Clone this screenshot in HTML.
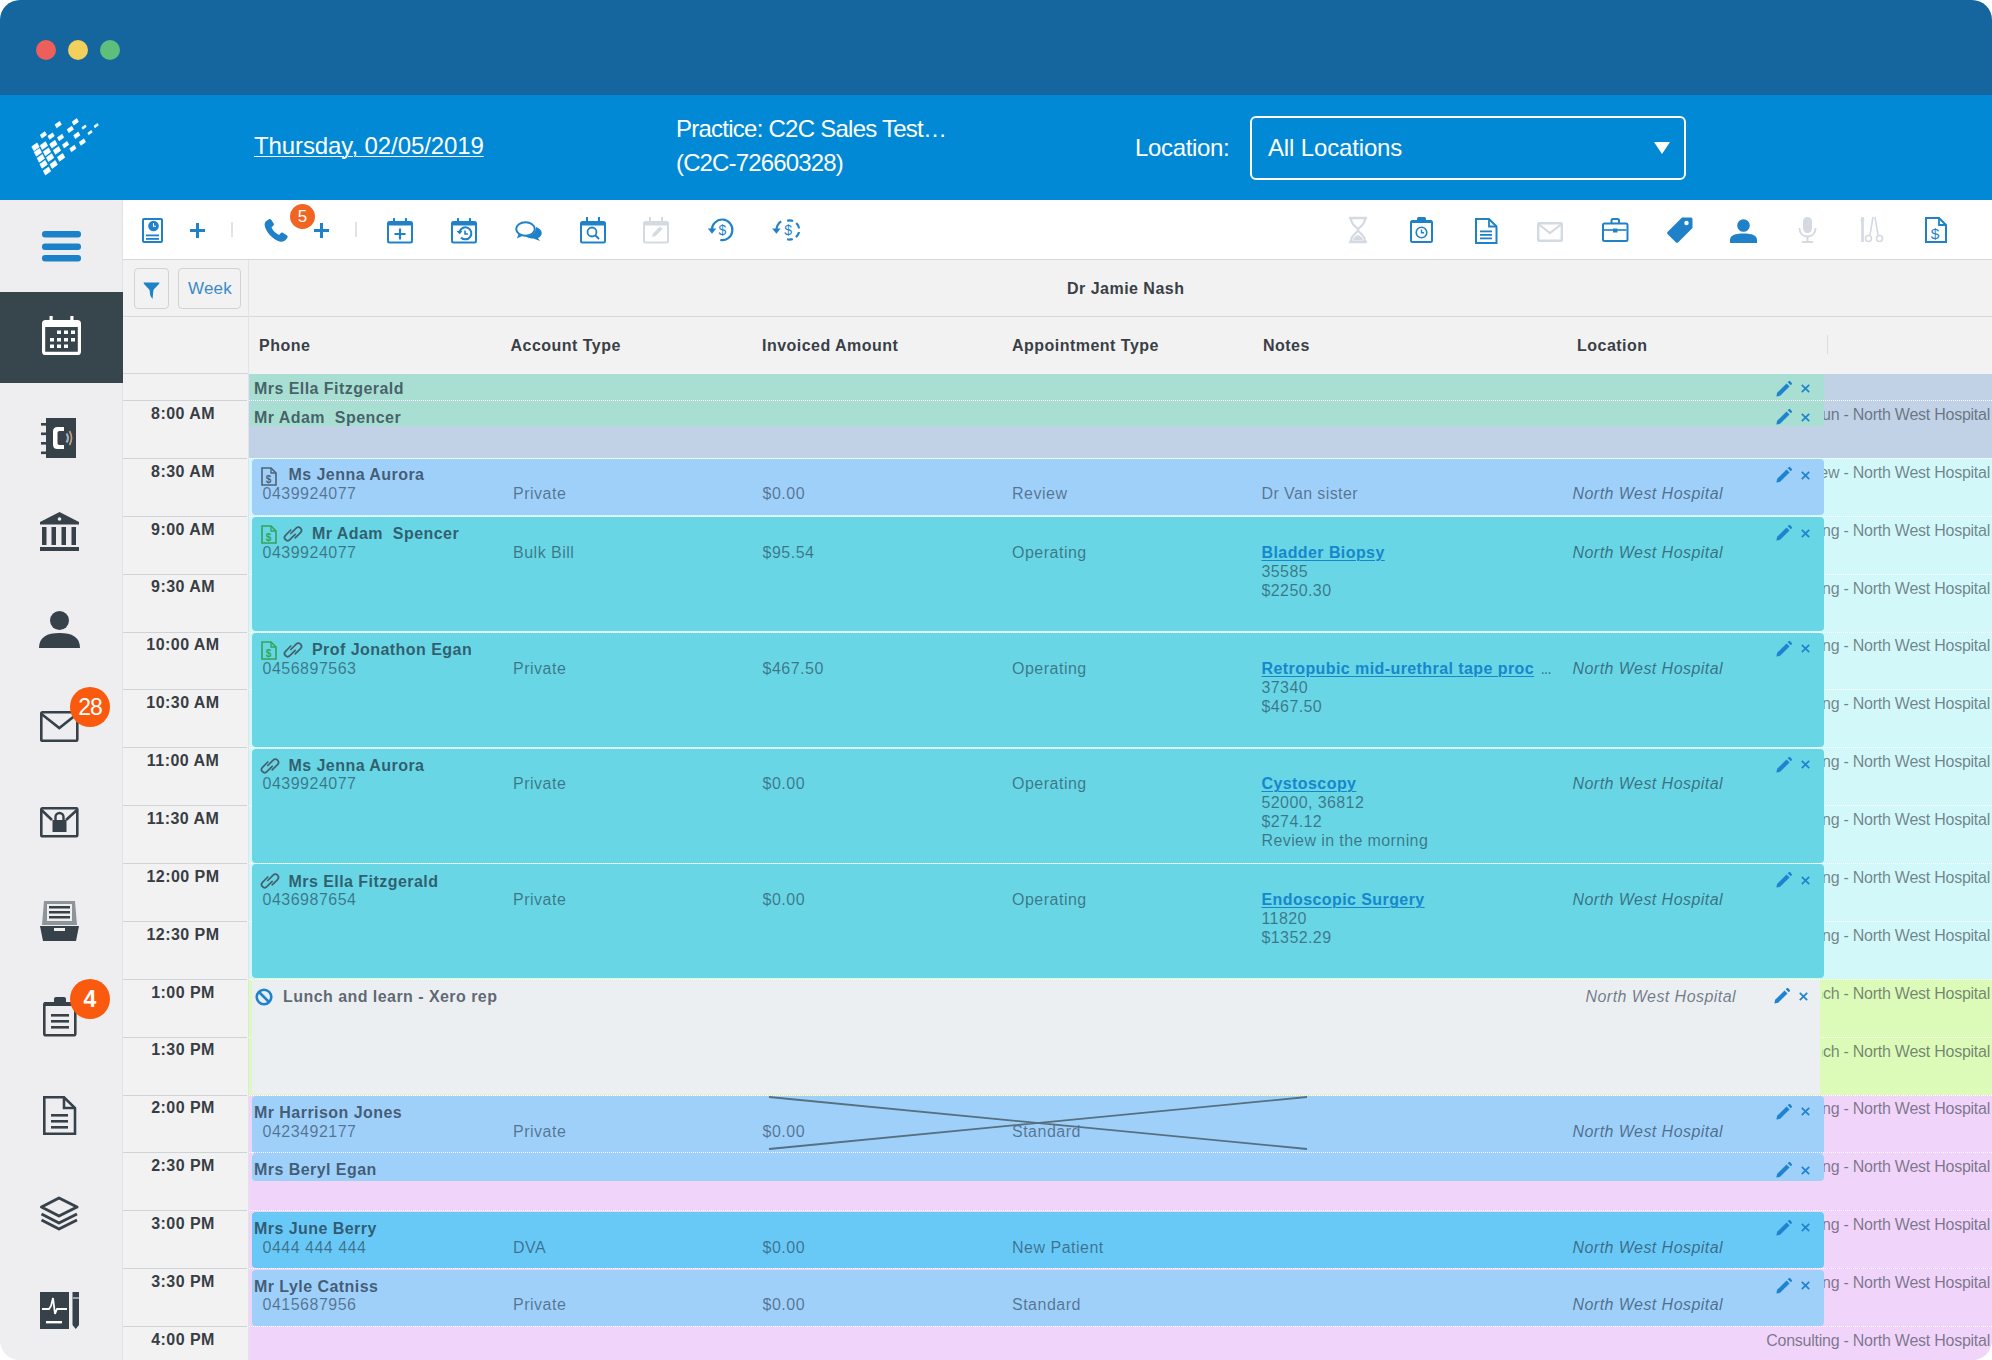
<!DOCTYPE html><html><head><meta charset="utf-8"><style>
*{box-sizing:border-box;}
html,body{margin:0;padding:0;background:#ffffff;width:1992px;height:1360px;overflow:hidden;}
body{font-family:"Liberation Sans", sans-serif;}
#win{position:absolute;left:0;top:0;width:1992px;height:1360px;border-radius:20px;overflow:hidden;background:#f2f2f2;}
.t{position:absolute;white-space:nowrap;line-height:1;}
svg{overflow:visible;}
</style></head><body><div id="win"><div style="position:absolute;left:0px;top:0px;width:1992px;height:95px;background:#15659e;"></div>
<div style="position:absolute;left:36px;top:40px;width:20px;height:20px;border-radius:50%;background:#ee5f5b;"></div>
<div style="position:absolute;left:68px;top:40px;width:20px;height:20px;border-radius:50%;background:#f3cf5b;"></div>
<div style="position:absolute;left:100px;top:40px;width:20px;height:20px;border-radius:50%;background:#5ebf7c;"></div>
<div style="position:absolute;left:0px;top:95px;width:1992px;height:105px;background:#0289d5;"></div>
<svg style="position:absolute;left:0px;top:0px;width:1992px;height:1360px;pointer-events:none" viewBox="0 0 1992 1360"><g fill="#ffffff" stroke="#ffffff" stroke-width="0.7" stroke-linejoin="round"><path d="M31.83 146.59 L37.08 142.92 L39.17 147.01 L33.92 150.68 Z"/><path d="M34.23 152.09 L39.48 148.42 L41.57 152.51 L36.32 156.18 Z"/><path d="M37.13 158.09 L42.38 154.42 L44.47 158.51 L39.22 162.18 Z"/><path d="M39.93 164.09 L45.18 160.42 L47.27 164.51 L42.02 168.18 Z"/><path d="M43.33 170.79 L48.58 167.12 L50.67 171.21 L45.42 174.88 Z"/><path d="M40.23 145.39 L45.48 141.72 L47.57 145.81 L42.32 149.48 Z"/><path d="M43.33 151.59 L48.58 147.92 L50.67 152.01 L45.42 155.68 Z"/><path d="M46.43 157.39 L51.68 153.72 L53.77 157.81 L48.52 161.48 Z"/><path d="M50.03 164.29 L55.28 160.62 L57.37 164.71 L52.12 168.38 Z"/><path d="M49.73 143.99 L54.98 140.32 L57.07 144.41 L51.82 148.08 Z"/><path d="M53.33 150.19 L58.58 146.52 L60.67 150.61 L55.42 154.28 Z"/><path d="M57.43 157.09 L62.68 153.42 L64.77 157.51 L59.52 161.18 Z"/><path d="M40.29 134.90 L44.88 131.69 L46.51 134.90 L41.92 138.11 Z"/><path d="M47.99 136.10 L52.58 132.89 L54.21 136.10 L49.62 139.31 Z"/><path d="M57.49 137.50 L62.08 134.29 L63.71 137.50 L59.12 140.71 Z"/><path d="M55.09 124.60 L59.68 121.39 L61.31 124.60 L56.72 127.81 Z"/><path d="M62.49 144.70 L67.08 141.49 L68.71 144.70 L64.12 147.91 Z"/><path d="M72.19 121.80 L76.78 118.59 L78.41 121.80 L73.82 125.01 Z"/><path d="M67.19 129.40 L71.78 126.19 L73.41 129.40 L68.82 132.61 Z"/><path d="M73.69 135.30 L78.28 132.09 L79.91 135.30 L75.32 138.51 Z"/><path d="M79.29 142.10 L83.88 138.89 L85.51 142.10 L80.92 145.31 Z"/><path d="M69.79 148.50 L74.38 145.29 L76.01 148.50 L71.42 151.71 Z"/><path d="M81.93 127.41 L85.37 125.00 L86.27 126.79 L82.83 129.20 Z"/><path d="M87.83 132.91 L91.27 130.50 L92.17 132.29 L88.73 134.70 Z"/><path d="M94.03 125.91 L97.47 123.50 L98.37 125.29 L94.93 127.70 Z"/></g></svg>
<div class="t" style="left:254px;top:134.3px;font-size:24px;color:#fff;text-decoration:underline;text-decoration-thickness:1.4px;text-underline-offset:1.5px;letter-spacing:-0.1px;">Thursday, 02/05/2019</div>
<div class="t" style="left:676px;top:117px;font-size:24px;color:#fff;letter-spacing:-0.75px;">Practice: C2C Sales Test…</div>
<div class="t" style="left:676px;top:151px;font-size:24px;color:#fff;letter-spacing:-0.85px;">(C2C-72660328)</div>
<div class="t" style="left:1135px;top:136px;font-size:24px;color:#fff;letter-spacing:-0.35px;">Location:</div>
<div style="position:absolute;left:1250px;top:116px;width:436px;height:64px;border:2.4px solid #fff;border-radius:6px;"></div>
<div class="t" style="left:1268px;top:136px;font-size:24px;color:#fff;letter-spacing:-0.15px;">All Locations</div>
<svg style="position:absolute;left:1654px;top:142px;width:16px;height:12px;" viewBox="0 0 16 12"><path d="M0 0H16L8 12Z" fill="#fff"/></svg>
<div style="position:absolute;left:0px;top:200px;width:123px;height:1160px;background:#eeeef0;border-right:1px solid #e2e2e4;"></div>
<svg style="position:absolute;left:42px;top:231px;width:39px;height:31px;" viewBox="0 0 39 31"><g fill="#1b82c9"><rect x="0" y="0" width="39" height="6.5" rx="3"/><rect x="0" y="12.5" width="39" height="6.5" rx="3"/><rect x="0" y="24" width="39" height="6.5" rx="3"/></g></svg>
<div style="position:absolute;left:0px;top:292px;width:123px;height:91px;background:#37454c;"></div>
<svg style="position:absolute;left:42px;top:316px;width:39px;height:39px;" viewBox="0 0 39 39"><g fill="none" stroke="#fff" stroke-width="3.2"><rect x="1.6" y="5.5" width="35.8" height="31.9" rx="2"/></g><g fill="#fff"><rect x="7.5" y="0" width="3.2" height="8"/><rect x="28.3" y="0" width="3.2" height="8"/><rect x="1" y="5" width="37" height="6"/><rect x="15" y="14.5" width="4" height="3.5"/><rect x="22" y="14.5" width="4" height="3.5"/><rect x="29" y="14.5" width="4" height="3.5"/><rect x="8" y="22" width="4" height="3.5"/><rect x="15" y="22" width="4" height="3.5"/><rect x="22" y="22" width="4" height="3.5"/><rect x="29" y="22" width="4" height="3.5"/><rect x="8" y="28.5" width="4" height="3.5"/><rect x="15" y="28.5" width="4" height="3.5"/><rect x="22" y="28.5" width="4" height="3.5"/></g></svg>
<svg style="position:absolute;left:41px;top:418px;width:37px;height:40px;" viewBox="0 0 37 40"><rect x="5" y="0" width="30" height="40" fill="#37414a"/><g fill="#37414a"><rect x="0" y="5" width="7" height="2.6"/><rect x="0" y="14.5" width="7" height="2.6"/><rect x="0" y="24" width="7" height="2.6"/><rect x="0" y="33.5" width="7" height="2.6"/></g><path d="M23 9 H16.5 C13.5 9 12 10.5 12 13.5 V26.5 C12 29.5 13.5 31 16.5 31 H23 V27 H18.5 C17.3 27 16.5 26.2 16.5 25 V15 C16.5 13.8 17.3 13 18.5 13 H23 Z" fill="#fff"/><path d="M25.5 15.5 Q28.5 20 25.5 24.5" stroke="#8fb0c8" stroke-width="2.2" fill="none"/><path d="M28.5 13 Q32.5 20 28.5 27" stroke="#c49a77" stroke-width="1.8" fill="none"/></svg>
<svg style="position:absolute;left:40px;top:512px;width:39px;height:39px;" viewBox="0 0 39 39"><g fill="#37414a"><path d="M19.5 0 L39 10 H0 Z"/><rect x="0" y="10" width="39" height="2.5"/><rect x="2" y="15" width="4.5" height="18"/><rect x="11.5" y="15" width="4.5" height="18"/><rect x="21.5" y="15" width="4.5" height="18"/><rect x="31.5" y="15" width="4.5" height="18"/><rect x="0" y="35" width="39" height="4"/></g><circle cx="19.5" cy="7" r="1.8" fill="#efefef"/></svg>
<svg style="position:absolute;left:39px;top:611px;width:41px;height:37px;" viewBox="0 0 41 37"><g fill="#37414a"><circle cx="20.5" cy="9.5" r="9.5"/><path d="M0 37 C0 26 8 22 20.5 22 C33 22 41 26 41 37 Z"/></g></svg>
<svg style="position:absolute;left:40px;top:711px;width:39px;height:31px;" viewBox="0 0 39 31"><g fill="none" stroke="#37414a" stroke-width="2.6"><rect x="1.3" y="1.3" width="36" height="28.5" rx="1"/><path d="M1.5 3 L19.3 17 L37 3"/></g></svg>
<svg style="position:absolute;left:40px;top:807px;width:39px;height:31px;" viewBox="0 0 39 31"><g fill="none" stroke="#37414a" stroke-width="2.6"><rect x="1.3" y="1.3" width="36" height="28" rx="1"/><path d="M1.5 3 L12 13"/><path d="M37 3 L26 13"/></g><g fill="#37414a"><rect x="12.5" y="13" width="14" height="12"/></g><path d="M15.5 13 V10 a4 4 0 0 1 8 0 V13" stroke="#37414a" stroke-width="2.4" fill="none"/></svg>
<svg style="position:absolute;left:40px;top:901px;width:39px;height:40px;" viewBox="0 0 39 40"><g fill="#37414a"><path d="M4 0 H35 L37 24 H2 Z" fill="#8d949a"/><rect x="7" y="3" width="25" height="17" fill="#efefef"/><rect x="9" y="5" width="21" height="2.5"/><rect x="9" y="10" width="21" height="2.5"/><rect x="9" y="15" width="21" height="2.5"/><path d="M0 25 H39 L36 40 H3 Z"/></g><rect x="14" y="27" width="11" height="3" fill="#efefef"/></svg>
<svg style="position:absolute;left:43px;top:997px;width:34px;height:40px;" viewBox="0 0 34 40"><g fill="none" stroke="#37414a" stroke-width="2.6"><rect x="1.3" y="6.3" width="31" height="32" rx="1.5"/></g><g fill="#37414a"><rect x="1" y="5" width="32" height="4"/><rect x="11" y="0" width="12" height="7" rx="2"/><rect x="8" y="17" width="18" height="2.6"/><rect x="8" y="23" width="18" height="2.6"/><rect x="8" y="29" width="18" height="2.6"/></g></svg>
<svg style="position:absolute;left:43px;top:1096px;width:33px;height:39px;" viewBox="0 0 33 39"><g fill="none" stroke="#37414a" stroke-width="2.6"><path d="M1.3 1.3 H21 L32 12 V37.7 H1.3 Z"/><path d="M21 1.3 V12 H32"/></g><g fill="#37414a"><rect x="8" y="18" width="17" height="2.6"/><rect x="8" y="24" width="17" height="2.6"/><rect x="8" y="30" width="17" height="2.6"/></g></svg>
<svg style="position:absolute;left:40px;top:1196px;width:39px;height:35px;" viewBox="0 0 39 35"><g fill="none" stroke="#37414a" stroke-width="3" stroke-linejoin="round"><path d="M19 2 L37 11 L19 20 L1.5 11 Z"/><path d="M1.5 18 L19 27 L37 18"/><path d="M1.5 24 L19 33 L37 24"/></g></svg>
<svg style="position:absolute;left:40px;top:1292px;width:39px;height:37px;" viewBox="0 0 39 37"><rect x="0" y="0" width="29" height="37" fill="#37414a"/><path d="M2 17 H9 L11 14 L13 6 L15 22 L17 17 H27" stroke="#fff" stroke-width="1.8" fill="none"/><rect x="6" y="29" width="16" height="2.4" fill="#fff"/><path d="M32.5 0 H39 V33 L35.75 37 L32.5 33 Z" fill="#37414a"/><rect x="32.5" y="5" width="6.5" height="2" fill="#9aa3ab"/></svg>
<div class="t" style="position:absolute;left:70px;top:687px;width:40px;height:40px;border-radius:50%;background:#fa5a0e;color:#fff;font-size:23px;text-align:center;line-height:40px;letter-spacing:-1px;">28</div>
<div class="t" style="position:absolute;left:70px;top:979px;width:40px;height:40px;border-radius:50%;background:#fa5a0e;color:#fff;font-size:23px;font-weight:bold;text-align:center;line-height:40px;">4</div>
<div style="position:absolute;left:123px;top:200px;width:1869px;height:60px;background:#fff;border-bottom:1.5px solid #d6d6d6;"></div>
<svg style="position:absolute;left:142px;top:218px;width:21px;height:25px;" viewBox="0 0 21 25"><rect x="1" y="1" width="19" height="23" rx="1" fill="none" stroke="#1f82c8" stroke-width="2"/><circle cx="11.5" cy="8" r="5.3" fill="#1f82c8"/><path d="M11.5 5 V8.3 H14" stroke="#fff" stroke-width="1.1" fill="none"/><rect x="4" y="16.5" width="13" height="1.8" fill="#1f82c8"/><rect x="4" y="20" width="13" height="1.8" fill="#1f82c8"/></svg>
<svg style="position:absolute;left:190px;top:223px;width:15px;height:15px;" viewBox="0 0 15 15"><path d="M7.5 0 V15 M0 7.5 H15" stroke="#1f82c8" stroke-width="3"/></svg>
<div style="position:absolute;left:231px;top:222px;width:1.5px;height:15px;background:#dfe3e8;"></div>
<svg style="position:absolute;left:264px;top:219px;width:24px;height:23px;" viewBox="0 0 24 23"><path d="M3 1.5 C1 2.5 0 5 1 8 C3 14 9 20.5 15.5 22.5 C18.5 23.5 21 22 22.5 20 L23.5 18.5 C24 17.5 23.5 16.8 22.8 16.3 L18.8 13.8 C18 13.3 17.2 13.6 16.6 14.3 L15.2 16 C11.5 14.5 8.8 11.8 7.5 8.3 L9.2 6.8 C10 6.2 10.2 5.3 9.7 4.5 L7.2 0.8 C6.7 0 5.8 -0.2 5 0.3 Z" fill="#1f82c8"/></svg>
<svg style="position:absolute;left:314px;top:223px;width:15px;height:15px;" viewBox="0 0 15 15"><path d="M7.5 0 V15 M0 7.5 H15" stroke="#1f82c8" stroke-width="3"/></svg>
<div style="position:absolute;left:355px;top:222px;width:1.5px;height:15px;background:#dfe3e8;"></div>
<div class="t" style="position:absolute;left:290px;top:204px;width:25px;height:25px;border-radius:50%;background:#f26422;color:#fff;font-size:17px;text-align:center;line-height:25px;">5</div>
<svg style="position:absolute;left:387px;top:218px;width:26px;height:25px;" viewBox="0 0 26 25"><rect x="1" y="4" width="24" height="20.5" rx="1.5" fill="none" stroke="#1f82c8" stroke-width="2"/><rect x="1" y="4" width="24" height="3.5" fill="#1f82c8"/><rect x="6" y="0" width="2" height="6" fill="#1f82c8"/><rect x="18" y="0" width="2" height="6" fill="#1f82c8"/><path d="M13 10.5 V21.5 M7.5 16 H18.5" stroke="#1f82c8" stroke-width="2.2"/></svg>
<svg style="position:absolute;left:451px;top:218px;width:26px;height:25px;" viewBox="0 0 26 25"><rect x="1" y="4" width="24" height="20.5" rx="1.5" fill="none" stroke="#1f82c8" stroke-width="2"/><rect x="1" y="4" width="24" height="3.5" fill="#1f82c8"/><rect x="6" y="0" width="2" height="6" fill="#1f82c8"/><rect x="18" y="0" width="2" height="6" fill="#1f82c8"/><path d="M8.5 14 A6 6 0 1 1 10 19.5" stroke="#1f82c8" stroke-width="2" fill="none"/><path d="M5.5 13 L8.7 16.5 L11.5 12.8 Z" fill="#1f82c8"/><path d="M14 12.5 V16 H17" stroke="#1f82c8" stroke-width="1.6" fill="none"/></svg>
<svg style="position:absolute;left:515px;top:221px;width:28px;height:20px;" viewBox="0 0 28 20"><ellipse cx="10.5" cy="8" rx="9.3" ry="6.8" fill="none" stroke="#1f82c8" stroke-width="2"/><path d="M3.5 13 L2 17.5 L8 14.5" fill="#1f82c8"/><path d="M21 6 C25.5 7.5 27.5 10.5 26.5 13.5 C25.8 15.5 24.5 16.5 23 17 L25 20 L18.5 17.5 C15 17.8 12 16.5 10.5 15 C16 15.5 21 12.5 21 6 Z" fill="#1f82c8"/></svg>
<svg style="position:absolute;left:580px;top:217px;width:26px;height:26px;" viewBox="0 0 26 26"><rect x="1" y="5" width="24" height="20.5" rx="1.5" fill="none" stroke="#1f82c8" stroke-width="2"/><rect x="1" y="5" width="24" height="3.5" fill="#1f82c8"/><rect x="6" y="0" width="2" height="6" fill="#1f82c8"/><rect x="18" y="0" width="2" height="6" fill="#1f82c8"/><circle cx="12" cy="15" r="4.5" fill="none" stroke="#1f82c8" stroke-width="1.8"/><path d="M15.3 18.3 L19 22" stroke="#1f82c8" stroke-width="2"/></svg>
<svg style="position:absolute;left:643px;top:217px;width:26px;height:26px;" viewBox="0 0 26 26"><rect x="1" y="5" width="24" height="20.5" rx="1.5" fill="none" stroke="#d3dae1" stroke-width="2"/><rect x="1" y="5" width="24" height="3.5" fill="#d3dae1"/><rect x="6" y="0" width="2" height="6" fill="#d3dae1"/><rect x="18" y="0" width="2" height="6" fill="#d3dae1"/><path d="M9 20 L10 16.5 L17 9.5 L19.5 12 L12.5 19 Z" fill="#d3dae1"/></svg>
<svg style="position:absolute;left:708px;top:218px;width:26px;height:24px;" viewBox="0 0 26 24"><path d="M3.8 11.9 A10.3 10.3 0 1 1 12.3 22.0" stroke="#1f82c8" stroke-width="2.1" fill="none"/><path d="M-0.2 10.6 H8.2 L4 15.8 Z" fill="#1f82c8"/><text x="14.3" y="17.2" font-family="Liberation Sans" font-size="14" fill="#1f82c8" text-anchor="middle">$</text></svg>
<svg style="position:absolute;left:772px;top:218px;width:26px;height:24px;" viewBox="0 0 26 24"><path d="M15.12 2.73 A9.6 9.6 0 1 1 15.12 21.27" stroke="#1f82c8" stroke-width="2.2" fill="none" stroke-dasharray="6.0 3.73"/><path d="M0.2 10.6 H8.6 L4.4 15.8 Z" fill="#1f82c8"/><path d="M9.2 3.4 Q5.2 6 4.4 11" stroke="#1f82c8" stroke-width="2.1" fill="none"/><text x="16.2" y="17.2" font-family="Liberation Sans" font-size="14" fill="#1f82c8" text-anchor="middle">$</text></svg>
<svg style="position:absolute;left:1348px;top:217px;width:20px;height:26px;" viewBox="0 0 20 26"><path d="M1 1 H19 M1 25 H19" stroke="#d3dae1" stroke-width="2.5"/><path d="M3 1.5 C3 9 10 10 10 13 C10 16 3 17 3 24.5 H17 C17 17 10 16 10 13 C10 10 17 9 17 1.5" stroke="#d3dae1" stroke-width="2.2" fill="none"/><path d="M5 23 C6 19 10 18 10 18 C10 18 14 19 15 23Z" fill="#d3dae1"/></svg>
<svg style="position:absolute;left:1410px;top:217px;width:23px;height:26px;" viewBox="0 0 23 26"><rect x="1" y="4" width="21" height="21" rx="1.5" fill="none" stroke="#1f82c8" stroke-width="2"/><rect x="1" y="3.5" width="21" height="2.5" fill="#1f82c8"/><rect x="7" y="0" width="9" height="5" rx="1.5" fill="#1f82c8"/><circle cx="11.5" cy="15.5" r="5.3" fill="none" stroke="#1f82c8" stroke-width="1.6"/><path d="M11.5 12.5 V15.8 H14" stroke="#1f82c8" stroke-width="1.4" fill="none"/></svg>
<svg style="position:absolute;left:1475px;top:218px;width:23px;height:26px;" viewBox="0 0 23 26"><path d="M1 1 H14 L21.5 8.5 V25 H1 Z" fill="none" stroke="#1f82c8" stroke-width="2"/><path d="M14 1 V8.5 H21.5" fill="none" stroke="#1f82c8" stroke-width="1.8"/><rect x="5" y="12.5" width="12" height="1.8" fill="#1f82c8"/><rect x="5" y="16" width="12" height="1.8" fill="#1f82c8"/><rect x="5" y="19.5" width="12" height="1.8" fill="#1f82c8"/></svg>
<svg style="position:absolute;left:1537px;top:222px;width:26px;height:20px;" viewBox="0 0 26 20"><rect x="1.2" y="1.2" width="23.6" height="17.6" rx="1" fill="none" stroke="#d3dae1" stroke-width="2.4"/><path d="M2 2.5 L13 11 L24 2.5" stroke="#d3dae1" stroke-width="2.2" fill="none"/></svg>
<svg style="position:absolute;left:1602px;top:218px;width:27px;height:24px;" viewBox="0 0 27 24"><rect x="1" y="5.5" width="24.5" height="17.5" rx="1.5" fill="none" stroke="#1f82c8" stroke-width="2"/><path d="M9.5 5.5 V2.5 A1.5 1.5 0 0 1 11 1 H15.5 A1.5 1.5 0 0 1 17 2.5 V5.5" stroke="#1f82c8" stroke-width="2" fill="none"/><path d="M2 12 H24.5" stroke="#1f82c8" stroke-width="1.6"/><rect x="11" y="10.5" width="4.5" height="4" fill="#1f82c8"/></svg>
<svg style="position:absolute;left:1667px;top:217px;width:26px;height:26px;" viewBox="0 0 26 26"><path d="M15 0.5 H24 A1.5 1.5 0 0 1 25.5 2 V11 L11 25.5 A1.5 1.5 0 0 1 9 25.5 L0.5 17 A1.5 1.5 0 0 1 0.5 15 Z" fill="#1f82c8"/><circle cx="19.5" cy="6" r="2.2" fill="#fff"/></svg>
<svg style="position:absolute;left:1730px;top:219px;width:27px;height:24px;" viewBox="0 0 27 24"><circle cx="13.5" cy="6.5" r="6.3" fill="#1f82c8"/><path d="M0 24 V21 C0 16.5 5 14.5 13.5 14.5 C22 14.5 27 16.5 27 21 V24 Z" fill="#1f82c8"/></svg>
<svg style="position:absolute;left:1798px;top:217px;width:19px;height:26px;" viewBox="0 0 19 26"><rect x="5" y="0" width="9" height="16" rx="4.5" fill="#d3dae1"/><path d="M1.5 11 C1.5 16.5 5 19.5 9.5 19.5 C14 19.5 17.5 16.5 17.5 11" stroke="#d3dae1" stroke-width="2" fill="none"/><path d="M9.5 19.5 V24 M4 25 H15" stroke="#d3dae1" stroke-width="2"/></svg>
<svg style="position:absolute;left:1860px;top:217px;width:25px;height:26px;" viewBox="0 0 25 26"><path d="M2.5 0 V25" stroke="#d3dae1" stroke-width="2.6"/><circle cx="2.5" cy="3" r="2" fill="#d3dae1"/><path d="M13 0 L10 18 M15 0 L18 18" stroke="#d3dae1" stroke-width="1.6" fill="none"/><circle cx="8.5" cy="21.5" r="3" fill="none" stroke="#d3dae1" stroke-width="1.6"/><circle cx="19.5" cy="21.5" r="3" fill="none" stroke="#d3dae1" stroke-width="1.6"/></svg>
<svg style="position:absolute;left:1925px;top:217px;width:22px;height:26px;" viewBox="0 0 22 26"><path d="M1 1 H14 L21 8 V25 H1 Z" fill="none" stroke="#1f82c8" stroke-width="2"/><path d="M14 1 V8 H21" fill="none" stroke="#1f82c8" stroke-width="1.8"/><text x="10" y="21.5" font-family="Liberation Sans" font-size="15.5" fill="#1f82c8" text-anchor="middle">$</text></svg>
<div style="position:absolute;left:123px;top:260px;width:1869px;height:57px;background:#f2f2f2;border-bottom:1.5px solid #d9d9d9;"></div>
<div style="position:absolute;left:123px;top:317px;width:1869px;height:57px;background:#f2f2f2;"></div>
<div style="position:absolute;left:123px;top:373px;width:125px;height:1.2px;background:#d3d6da;"></div>
<div style="position:absolute;left:247.5px;top:260px;width:1.5px;height:1100px;background:#dfe4ec;"></div>
<div style="position:absolute;left:134px;top:268px;width:35px;height:41px;border:1px solid #d2d2d2;border-radius:4px;background:#f2f2f2;"></div>
<svg style="position:absolute;left:143px;top:282px;width:17px;height:17px;" viewBox="0 0 17 17"><path d="M0.5 0.5 H16.5 C16 3 12 5.5 10.5 8 C10 10 10.2 13 9.5 17 L7.5 14 C6.8 12 7 10 6.5 8 C5 5.5 1 3 0.5 0.5 Z" fill="#1f82c8"/></svg>
<div style="position:absolute;left:178px;top:268px;width:63px;height:41px;border:1px solid #d2d2d2;border-radius:4px;background:#f2f2f2;"></div>
<div class="t" style="left:188px;top:280px;font-size:17px;color:#3a8ac9;letter-spacing:0.2px;">Week</div>
<div class="t" style="left:1067px;top:281px;font-size:16px;font-weight:bold;color:#3a3f47;letter-spacing:0.48px;">Dr Jamie Nash</div>
<div class="t" style="left:259px;top:337.6px;font-size:16px;font-weight:bold;color:#3a3f47;letter-spacing:0.48px;">Phone</div>
<div class="t" style="left:510.5px;top:337.6px;font-size:16px;font-weight:bold;color:#3a3f47;letter-spacing:0.48px;">Account Type</div>
<div class="t" style="left:762px;top:337.6px;font-size:16px;font-weight:bold;color:#3a3f47;letter-spacing:0.48px;">Invoiced Amount</div>
<div class="t" style="left:1012px;top:337.6px;font-size:16px;font-weight:bold;color:#3a3f47;letter-spacing:0.48px;">Appointment Type</div>
<div class="t" style="left:1263px;top:337.6px;font-size:16px;font-weight:bold;color:#3a3f47;letter-spacing:0.48px;">Notes</div>
<div class="t" style="left:1577px;top:337.6px;font-size:16px;font-weight:bold;color:#3a3f47;letter-spacing:0.48px;">Location</div>
<div style="position:absolute;left:1827px;top:335px;width:1px;height:19px;background:#dcdcdc;"></div>
<div style="position:absolute;left:123px;top:400px;width:124px;height:1px;background:#cfd3d8;"></div>
<div class="t" style="left:123px;width:120px;text-align:center;top:405.80px;font-size:16px;font-weight:bold;color:#383d44;letter-spacing:0.45px;">8:00 AM</div>
<div style="position:absolute;left:123px;top:458px;width:124px;height:1px;background:#cfd3d8;"></div>
<div class="t" style="left:123px;width:120px;text-align:center;top:463.68px;font-size:16px;font-weight:bold;color:#383d44;letter-spacing:0.45px;">8:30 AM</div>
<div style="position:absolute;left:123px;top:516px;width:124px;height:1px;background:#cfd3d8;"></div>
<div class="t" style="left:123px;width:120px;text-align:center;top:521.56px;font-size:16px;font-weight:bold;color:#383d44;letter-spacing:0.45px;">9:00 AM</div>
<div style="position:absolute;left:123px;top:574px;width:124px;height:1px;background:#cfd3d8;"></div>
<div class="t" style="left:123px;width:120px;text-align:center;top:579.44px;font-size:16px;font-weight:bold;color:#383d44;letter-spacing:0.45px;">9:30 AM</div>
<div style="position:absolute;left:123px;top:632px;width:124px;height:1px;background:#cfd3d8;"></div>
<div class="t" style="left:123px;width:120px;text-align:center;top:637.32px;font-size:16px;font-weight:bold;color:#383d44;letter-spacing:0.45px;">10:00 AM</div>
<div style="position:absolute;left:123px;top:689px;width:124px;height:1px;background:#cfd3d8;"></div>
<div class="t" style="left:123px;width:120px;text-align:center;top:695.20px;font-size:16px;font-weight:bold;color:#383d44;letter-spacing:0.45px;">10:30 AM</div>
<div style="position:absolute;left:123px;top:747px;width:124px;height:1px;background:#cfd3d8;"></div>
<div class="t" style="left:123px;width:120px;text-align:center;top:753.08px;font-size:16px;font-weight:bold;color:#383d44;letter-spacing:0.45px;">11:00 AM</div>
<div style="position:absolute;left:123px;top:805px;width:124px;height:1px;background:#cfd3d8;"></div>
<div class="t" style="left:123px;width:120px;text-align:center;top:810.96px;font-size:16px;font-weight:bold;color:#383d44;letter-spacing:0.45px;">11:30 AM</div>
<div style="position:absolute;left:123px;top:863px;width:124px;height:1px;background:#cfd3d8;"></div>
<div class="t" style="left:123px;width:120px;text-align:center;top:868.84px;font-size:16px;font-weight:bold;color:#383d44;letter-spacing:0.45px;">12:00 PM</div>
<div style="position:absolute;left:123px;top:921px;width:124px;height:1px;background:#cfd3d8;"></div>
<div class="t" style="left:123px;width:120px;text-align:center;top:926.72px;font-size:16px;font-weight:bold;color:#383d44;letter-spacing:0.45px;">12:30 PM</div>
<div style="position:absolute;left:123px;top:979px;width:124px;height:1px;background:#cfd3d8;"></div>
<div class="t" style="left:123px;width:120px;text-align:center;top:984.60px;font-size:16px;font-weight:bold;color:#383d44;letter-spacing:0.45px;">1:00 PM</div>
<div style="position:absolute;left:123px;top:1037px;width:124px;height:1px;background:#cfd3d8;"></div>
<div class="t" style="left:123px;width:120px;text-align:center;top:1042.48px;font-size:16px;font-weight:bold;color:#383d44;letter-spacing:0.45px;">1:30 PM</div>
<div style="position:absolute;left:123px;top:1095px;width:124px;height:1px;background:#cfd3d8;"></div>
<div class="t" style="left:123px;width:120px;text-align:center;top:1100.36px;font-size:16px;font-weight:bold;color:#383d44;letter-spacing:0.45px;">2:00 PM</div>
<div style="position:absolute;left:123px;top:1152px;width:124px;height:1px;background:#cfd3d8;"></div>
<div class="t" style="left:123px;width:120px;text-align:center;top:1158.24px;font-size:16px;font-weight:bold;color:#383d44;letter-spacing:0.45px;">2:30 PM</div>
<div style="position:absolute;left:123px;top:1210px;width:124px;height:1px;background:#cfd3d8;"></div>
<div class="t" style="left:123px;width:120px;text-align:center;top:1216.12px;font-size:16px;font-weight:bold;color:#383d44;letter-spacing:0.45px;">3:00 PM</div>
<div style="position:absolute;left:123px;top:1268px;width:124px;height:1px;background:#cfd3d8;"></div>
<div class="t" style="left:123px;width:120px;text-align:center;top:1274.00px;font-size:16px;font-weight:bold;color:#383d44;letter-spacing:0.45px;">3:30 PM</div>
<div style="position:absolute;left:123px;top:1326px;width:124px;height:1px;background:#cfd3d8;"></div>
<div class="t" style="left:123px;width:120px;text-align:center;top:1331.88px;font-size:16px;font-weight:bold;color:#383d44;letter-spacing:0.45px;">4:00 PM</div>
<div style="position:absolute;left:249px;top:373.7px;width:1743px;height:84.58px;background:#c1d1e6;"></div>
<div style="position:absolute;left:249px;top:458.28px;width:1743px;height:520.92px;background:#d3f8f9;"></div>
<div style="position:absolute;left:249px;top:979.2px;width:1743px;height:115.76px;background:#dcfbb8;"></div>
<div style="position:absolute;left:249px;top:1094.96px;width:1743px;height:265.04px;background:#f0d4fa;"></div>
<div style="position:absolute;left:1822px;top:0;width:170px;height:1360px;overflow:hidden;">
<div class="t" style="right:2px;top:406.90px;font-size:16px;color:rgba(45,55,65,.6);letter-spacing:-0.25px;">Ward Run - North West Hospital</div>
<div class="t" style="right:2px;top:464.78px;font-size:16px;color:rgba(45,55,65,.6);letter-spacing:-0.25px;">Review - North West Hospital</div>
<div class="t" style="right:2px;top:522.66px;font-size:16px;color:rgba(45,55,65,.6);letter-spacing:-0.25px;">Operating - North West Hospital</div>
<div class="t" style="right:2px;top:580.54px;font-size:16px;color:rgba(45,55,65,.6);letter-spacing:-0.25px;">Operating - North West Hospital</div>
<div class="t" style="right:2px;top:638.42px;font-size:16px;color:rgba(45,55,65,.6);letter-spacing:-0.25px;">Operating - North West Hospital</div>
<div class="t" style="right:2px;top:696.30px;font-size:16px;color:rgba(45,55,65,.6);letter-spacing:-0.25px;">Operating - North West Hospital</div>
<div class="t" style="right:2px;top:754.18px;font-size:16px;color:rgba(45,55,65,.6);letter-spacing:-0.25px;">Operating - North West Hospital</div>
<div class="t" style="right:2px;top:812.06px;font-size:16px;color:rgba(45,55,65,.6);letter-spacing:-0.25px;">Operating - North West Hospital</div>
<div class="t" style="right:2px;top:869.94px;font-size:16px;color:rgba(45,55,65,.6);letter-spacing:-0.25px;">Operating - North West Hospital</div>
<div class="t" style="right:2px;top:927.82px;font-size:16px;color:rgba(45,55,65,.6);letter-spacing:-0.25px;">Operating - North West Hospital</div>
<div class="t" style="right:2px;top:985.70px;font-size:16px;color:rgba(45,55,65,.6);letter-spacing:-0.25px;">Lunch - North West Hospital</div>
<div class="t" style="right:2px;top:1043.58px;font-size:16px;color:rgba(45,55,65,.6);letter-spacing:-0.25px;">Lunch - North West Hospital</div>
<div class="t" style="right:2px;top:1101.46px;font-size:16px;color:rgba(45,55,65,.6);letter-spacing:-0.25px;">Consulting - North West Hospital</div>
<div class="t" style="right:2px;top:1159.34px;font-size:16px;color:rgba(45,55,65,.6);letter-spacing:-0.25px;">Consulting - North West Hospital</div>
<div class="t" style="right:2px;top:1217.22px;font-size:16px;color:rgba(45,55,65,.6);letter-spacing:-0.25px;">Consulting - North West Hospital</div>
<div class="t" style="right:2px;top:1275.10px;font-size:16px;color:rgba(45,55,65,.6);letter-spacing:-0.25px;">Consulting - North West Hospital</div>
</div>
<div class="t" style="right:2px;top:1332.98px;font-size:16px;color:rgba(45,55,65,.6);letter-spacing:-0.25px;">Consulting - North West Hospital</div>
<div style="position:absolute;left:249px;top:400px;width:1743px;height:0px;border-top:1px dotted #ffffff;"></div>
<div style="position:absolute;left:249px;top:458px;width:1743px;height:0px;border-top:1px dotted #ffffff;"></div>
<div style="position:absolute;left:249px;top:516px;width:1743px;height:0px;border-top:1px dotted #ffffff;"></div>
<div style="position:absolute;left:249px;top:574px;width:1743px;height:0px;border-top:1px dotted #ffffff;"></div>
<div style="position:absolute;left:249px;top:632px;width:1743px;height:0px;border-top:1px dotted #ffffff;"></div>
<div style="position:absolute;left:249px;top:689px;width:1743px;height:0px;border-top:1px dotted #ffffff;"></div>
<div style="position:absolute;left:249px;top:747px;width:1743px;height:0px;border-top:1px dotted #ffffff;"></div>
<div style="position:absolute;left:249px;top:805px;width:1743px;height:0px;border-top:1px dotted #ffffff;"></div>
<div style="position:absolute;left:249px;top:863px;width:1743px;height:0px;border-top:1px dotted #ffffff;"></div>
<div style="position:absolute;left:249px;top:921px;width:1743px;height:0px;border-top:1px dotted #ffffff;"></div>
<div style="position:absolute;left:249px;top:979px;width:1743px;height:0px;border-top:1px dotted #ffffff;"></div>
<div style="position:absolute;left:249px;top:1037px;width:1743px;height:0px;border-top:1px dotted #ffffff;"></div>
<div style="position:absolute;left:249px;top:1095px;width:1743px;height:0px;border-top:1px dotted #ffffff;"></div>
<div style="position:absolute;left:249px;top:1152px;width:1743px;height:0px;border-top:1px dotted #ffffff;"></div>
<div style="position:absolute;left:249px;top:1210px;width:1743px;height:0px;border-top:1px dotted #ffffff;"></div>
<div style="position:absolute;left:249px;top:1268px;width:1743px;height:0px;border-top:1px dotted #ffffff;"></div>
<div style="position:absolute;left:249px;top:1326px;width:1743px;height:0px;border-top:1px dotted #ffffff;"></div>
<div style="position:absolute;left:249.5px;top:373.7px;width:1574.5px;height:26.2px;background:#a8dfd2;border-radius:0px;"></div>
<div class="t" style="left:254px;top:381.00px;font-size:16px;color:rgba(20,35,50,.68);letter-spacing:0.45px;font-weight:bold;">Mrs Ella Fitzgerald</div>
<svg style="position:absolute;left:1775.5px;top:380.7px;width:16px;height:16px;" viewBox="0 0 17 17"><path d="M1.2 12.6 L11.2 2.6 L14.4 5.8 L4.4 15.8 L0.4 16.6 Z" fill="#1f83cf"/><path d="M12.4 1.4 L13.6 0.2 A1 1 0 0 1 15 0.2 L16.8 2 A1 1 0 0 1 16.8 3.4 L15.6 4.6 Z" fill="#1f83cf"/></svg>
<svg style="position:absolute;left:1801px;top:384.2px;width:9px;height:9px;" viewBox="0 0 9 9"><path d="M0.8 0.8 L8.2 8.2 M8.2 0.8 L0.8 8.2" stroke="#1f83cf" stroke-width="1.7"/></svg>
<div style="position:absolute;left:249.5px;top:401px;width:1574.5px;height:24.7px;background:#a8dfd2;border-radius:0px;"></div>
<div class="t" style="left:254px;top:409.70px;font-size:16px;color:rgba(20,35,50,.68);letter-spacing:0.45px;font-weight:bold;">Mr Adam&nbsp; Spencer</div>
<svg style="position:absolute;left:1775.5px;top:409px;width:16px;height:16px;" viewBox="0 0 17 17"><path d="M1.2 12.6 L11.2 2.6 L14.4 5.8 L4.4 15.8 L0.4 16.6 Z" fill="#1f83cf"/><path d="M12.4 1.4 L13.6 0.2 A1 1 0 0 1 15 0.2 L16.8 2 A1 1 0 0 1 16.8 3.4 L15.6 4.6 Z" fill="#1f83cf"/></svg>
<svg style="position:absolute;left:1801px;top:412.5px;width:9px;height:9px;" viewBox="0 0 9 9"><path d="M0.8 0.8 L8.2 8.2 M8.2 0.8 L0.8 8.2" stroke="#1f83cf" stroke-width="1.7"/></svg>
<div style="position:absolute;left:252px;top:459.28px;width:1572px;height:55.98px;background:#9fd0fa;border-radius:4px;"></div>
<svg style="position:absolute;left:261px;top:467.08px;width:16px;height:19px;" viewBox="0 0 16 19"><path d="M1 1 H10 L15 6 V18 H1 Z" fill="none" stroke="#4a6475" stroke-width="1.6"/><path d="M10 1 V6 H15" fill="none" stroke="#4a6475" stroke-width="1.3"/><text x="7.5" y="15.5" font-family="Liberation Sans" font-weight="bold" font-size="10" fill="#4a6475" text-anchor="middle">$</text></svg>
<div class="t" style="left:288.5px;top:467.28px;font-size:16px;color:rgba(20,35,50,.68);letter-spacing:0.45px;font-weight:bold;">Ms Jenna Aurora</div>
<div class="t" style="left:262.5px;top:485.98px;font-size:16px;color:rgba(25,45,65,.56);letter-spacing:0.5px;">0439924077</div>
<div class="t" style="left:513px;top:485.98px;font-size:16px;color:rgba(25,45,65,.56);letter-spacing:0.5px;">Private</div>
<div class="t" style="left:762.5px;top:485.98px;font-size:16px;color:rgba(25,45,65,.56);letter-spacing:0.5px;">$0.00</div>
<div class="t" style="left:1012px;top:485.98px;font-size:16px;color:rgba(25,45,65,.56);letter-spacing:0.5px;">Review</div>
<div class="t" style="left:1572.5px;top:485.98px;font-size:16px;color:rgba(25,45,65,.6);letter-spacing:0.45px;font-style:italic;">North West Hospital</div>
<div class="t" style="left:1261.5px;top:485.98px;font-size:16px;color:rgba(25,45,65,.56);letter-spacing:0.4px;">Dr Van sister</div>
<svg style="position:absolute;left:1775.5px;top:467.28px;width:16px;height:16px;" viewBox="0 0 17 17"><path d="M1.2 12.6 L11.2 2.6 L14.4 5.8 L4.4 15.8 L0.4 16.6 Z" fill="#1f83cf"/><path d="M12.4 1.4 L13.6 0.2 A1 1 0 0 1 15 0.2 L16.8 2 A1 1 0 0 1 16.8 3.4 L15.6 4.6 Z" fill="#1f83cf"/></svg>
<svg style="position:absolute;left:1801px;top:470.78px;width:9px;height:9px;" viewBox="0 0 9 9"><path d="M0.8 0.8 L8.2 8.2 M8.2 0.8 L0.8 8.2" stroke="#1f83cf" stroke-width="1.7"/></svg>
<div style="position:absolute;left:252px;top:517.16px;width:1572px;height:113.86px;background:#68d6e5;border-radius:4px;"></div>
<svg style="position:absolute;left:261px;top:524.9599999999999px;width:16px;height:19px;" viewBox="0 0 16 19"><path d="M1 1 H10 L15 6 V18 H1 Z" fill="none" stroke="#33a457" stroke-width="1.6"/><path d="M10 1 V6 H15" fill="none" stroke="#33a457" stroke-width="1.3"/><text x="7.5" y="15.5" font-family="Liberation Sans" font-weight="bold" font-size="10" fill="#33a457" text-anchor="middle">$</text></svg>
<svg style="position:absolute;left:282.7px;top:525.16px;width:20px;height:19px;" viewBox="0 0 18 17"><g fill="none" stroke="#44606c" stroke-width="1.5" stroke-linecap="round"><path d="M10.98 11.58 L15.78 6.78 A2.8 2.8 0 0 0 11.82 2.82 L7.02 7.62"/><path d="M7.02 4.42 L2.22 9.22 A2.8 2.8 0 0 0 6.18 13.18 L10.98 8.38"/></g></svg>
<div class="t" style="left:312px;top:526.26px;font-size:16px;color:rgba(20,35,50,.68);letter-spacing:0.45px;font-weight:bold;">Mr Adam&nbsp; Spencer</div>
<div class="t" style="left:262.5px;top:544.96px;font-size:16px;color:rgba(25,45,65,.56);letter-spacing:0.5px;">0439924077</div>
<div class="t" style="left:513px;top:544.96px;font-size:16px;color:rgba(25,45,65,.56);letter-spacing:0.5px;">Bulk Bill</div>
<div class="t" style="left:762.5px;top:544.96px;font-size:16px;color:rgba(25,45,65,.56);letter-spacing:0.5px;">$95.54</div>
<div class="t" style="left:1012px;top:544.96px;font-size:16px;color:rgba(25,45,65,.56);letter-spacing:0.5px;">Operating</div>
<div class="t" style="left:1572.5px;top:544.96px;font-size:16px;color:rgba(25,45,65,.6);letter-spacing:0.45px;font-style:italic;">North West Hospital</div>
<div class="t" style="left:1261.5px;top:544.96px;font-size:16px;color:#1787cc;letter-spacing:0.42px;font-weight:bold;text-decoration:underline;text-decoration-thickness:1.3px;text-underline-offset:2px;">Bladder Biopsy</div>
<div class="t" style="left:1261.5px;top:563.96px;font-size:16px;color:rgba(25,45,65,.56);letter-spacing:0.4px;">35585</div>
<div class="t" style="left:1261.5px;top:582.96px;font-size:16px;color:rgba(25,45,65,.56);letter-spacing:0.4px;">$2250.30</div>
<svg style="position:absolute;left:1775.5px;top:525.16px;width:16px;height:16px;" viewBox="0 0 17 17"><path d="M1.2 12.6 L11.2 2.6 L14.4 5.8 L4.4 15.8 L0.4 16.6 Z" fill="#1f83cf"/><path d="M12.4 1.4 L13.6 0.2 A1 1 0 0 1 15 0.2 L16.8 2 A1 1 0 0 1 16.8 3.4 L15.6 4.6 Z" fill="#1f83cf"/></svg>
<svg style="position:absolute;left:1801px;top:528.66px;width:9px;height:9px;" viewBox="0 0 9 9"><path d="M0.8 0.8 L8.2 8.2 M8.2 0.8 L0.8 8.2" stroke="#1f83cf" stroke-width="1.7"/></svg>
<div style="position:absolute;left:252px;top:632.92px;width:1572px;height:113.86px;background:#68d6e5;border-radius:4px;"></div>
<svg style="position:absolute;left:261px;top:640.7199999999999px;width:16px;height:19px;" viewBox="0 0 16 19"><path d="M1 1 H10 L15 6 V18 H1 Z" fill="none" stroke="#33a457" stroke-width="1.6"/><path d="M10 1 V6 H15" fill="none" stroke="#33a457" stroke-width="1.3"/><text x="7.5" y="15.5" font-family="Liberation Sans" font-weight="bold" font-size="10" fill="#33a457" text-anchor="middle">$</text></svg>
<svg style="position:absolute;left:282.7px;top:640.92px;width:20px;height:19px;" viewBox="0 0 18 17"><g fill="none" stroke="#44606c" stroke-width="1.5" stroke-linecap="round"><path d="M10.98 11.58 L15.78 6.78 A2.8 2.8 0 0 0 11.82 2.82 L7.02 7.62"/><path d="M7.02 4.42 L2.22 9.22 A2.8 2.8 0 0 0 6.18 13.18 L10.98 8.38"/></g></svg>
<div class="t" style="left:312px;top:642.02px;font-size:16px;color:rgba(20,35,50,.68);letter-spacing:0.45px;font-weight:bold;">Prof Jonathon Egan</div>
<div class="t" style="left:262.5px;top:660.72px;font-size:16px;color:rgba(25,45,65,.56);letter-spacing:0.5px;">0456897563</div>
<div class="t" style="left:513px;top:660.72px;font-size:16px;color:rgba(25,45,65,.56);letter-spacing:0.5px;">Private</div>
<div class="t" style="left:762.5px;top:660.72px;font-size:16px;color:rgba(25,45,65,.56);letter-spacing:0.5px;">$467.50</div>
<div class="t" style="left:1012px;top:660.72px;font-size:16px;color:rgba(25,45,65,.56);letter-spacing:0.5px;">Operating</div>
<div class="t" style="left:1572.5px;top:660.72px;font-size:16px;color:rgba(25,45,65,.6);letter-spacing:0.45px;font-style:italic;">North West Hospital</div>
<div class="t" style="left:1261.5px;top:660.72px;font-size:16px;color:#1787cc;letter-spacing:0.42px;font-weight:bold;text-decoration:underline;text-decoration-thickness:1.3px;text-underline-offset:2px;">Retropubic mid-urethral tape proc</div>
<div class="t" style="left:1261.5px;top:679.72px;font-size:16px;color:rgba(25,45,65,.56);letter-spacing:0.4px;">37340</div>
<div class="t" style="left:1261.5px;top:698.72px;font-size:16px;color:rgba(25,45,65,.56);letter-spacing:0.4px;">$467.50</div>
<svg style="position:absolute;left:1775.5px;top:640.92px;width:16px;height:16px;" viewBox="0 0 17 17"><path d="M1.2 12.6 L11.2 2.6 L14.4 5.8 L4.4 15.8 L0.4 16.6 Z" fill="#1f83cf"/><path d="M12.4 1.4 L13.6 0.2 A1 1 0 0 1 15 0.2 L16.8 2 A1 1 0 0 1 16.8 3.4 L15.6 4.6 Z" fill="#1f83cf"/></svg>
<svg style="position:absolute;left:1801px;top:644.42px;width:9px;height:9px;" viewBox="0 0 9 9"><path d="M0.8 0.8 L8.2 8.2 M8.2 0.8 L0.8 8.2" stroke="#1f83cf" stroke-width="1.7"/></svg>
<div class="t" style="left:1540.5px;top:660.72px;font-size:16px;color:rgba(25,45,65,.56);letter-spacing:-1.1px;">...</div>
<div style="position:absolute;left:252px;top:748.68px;width:1572px;height:113.86px;background:#68d6e5;border-radius:4px;"></div>
<svg style="position:absolute;left:260.2px;top:756.68px;width:20px;height:19px;" viewBox="0 0 18 17"><g fill="none" stroke="#44606c" stroke-width="1.5" stroke-linecap="round"><path d="M10.98 11.58 L15.78 6.78 A2.8 2.8 0 0 0 11.82 2.82 L7.02 7.62"/><path d="M7.02 4.42 L2.22 9.22 A2.8 2.8 0 0 0 6.18 13.18 L10.98 8.38"/></g></svg>
<div class="t" style="left:288.5px;top:757.78px;font-size:16px;color:rgba(20,35,50,.68);letter-spacing:0.45px;font-weight:bold;">Ms Jenna Aurora</div>
<div class="t" style="left:262.5px;top:776.48px;font-size:16px;color:rgba(25,45,65,.56);letter-spacing:0.5px;">0439924077</div>
<div class="t" style="left:513px;top:776.48px;font-size:16px;color:rgba(25,45,65,.56);letter-spacing:0.5px;">Private</div>
<div class="t" style="left:762.5px;top:776.48px;font-size:16px;color:rgba(25,45,65,.56);letter-spacing:0.5px;">$0.00</div>
<div class="t" style="left:1012px;top:776.48px;font-size:16px;color:rgba(25,45,65,.56);letter-spacing:0.5px;">Operating</div>
<div class="t" style="left:1572.5px;top:776.48px;font-size:16px;color:rgba(25,45,65,.6);letter-spacing:0.45px;font-style:italic;">North West Hospital</div>
<div class="t" style="left:1261.5px;top:776.48px;font-size:16px;color:#1787cc;letter-spacing:0.42px;font-weight:bold;text-decoration:underline;text-decoration-thickness:1.3px;text-underline-offset:2px;">Cystoscopy</div>
<div class="t" style="left:1261.5px;top:795.48px;font-size:16px;color:rgba(25,45,65,.56);letter-spacing:0.4px;">52000, 36812</div>
<div class="t" style="left:1261.5px;top:814.48px;font-size:16px;color:rgba(25,45,65,.56);letter-spacing:0.4px;">$274.12</div>
<div class="t" style="left:1261.5px;top:833.48px;font-size:16px;color:rgba(25,45,65,.56);letter-spacing:0.4px;">Review in the morning</div>
<svg style="position:absolute;left:1775.5px;top:756.68px;width:16px;height:16px;" viewBox="0 0 17 17"><path d="M1.2 12.6 L11.2 2.6 L14.4 5.8 L4.4 15.8 L0.4 16.6 Z" fill="#1f83cf"/><path d="M12.4 1.4 L13.6 0.2 A1 1 0 0 1 15 0.2 L16.8 2 A1 1 0 0 1 16.8 3.4 L15.6 4.6 Z" fill="#1f83cf"/></svg>
<svg style="position:absolute;left:1801px;top:760.18px;width:9px;height:9px;" viewBox="0 0 9 9"><path d="M0.8 0.8 L8.2 8.2 M8.2 0.8 L0.8 8.2" stroke="#1f83cf" stroke-width="1.7"/></svg>
<div style="position:absolute;left:252px;top:864.44px;width:1572px;height:113.86px;background:#68d6e5;border-radius:4px;"></div>
<svg style="position:absolute;left:260.2px;top:872.44px;width:20px;height:19px;" viewBox="0 0 18 17"><g fill="none" stroke="#44606c" stroke-width="1.5" stroke-linecap="round"><path d="M10.98 11.58 L15.78 6.78 A2.8 2.8 0 0 0 11.82 2.82 L7.02 7.62"/><path d="M7.02 4.42 L2.22 9.22 A2.8 2.8 0 0 0 6.18 13.18 L10.98 8.38"/></g></svg>
<div class="t" style="left:288.5px;top:873.54px;font-size:16px;color:rgba(20,35,50,.68);letter-spacing:0.45px;font-weight:bold;">Mrs Ella Fitzgerald</div>
<div class="t" style="left:262.5px;top:892.24px;font-size:16px;color:rgba(25,45,65,.56);letter-spacing:0.5px;">0436987654</div>
<div class="t" style="left:513px;top:892.24px;font-size:16px;color:rgba(25,45,65,.56);letter-spacing:0.5px;">Private</div>
<div class="t" style="left:762.5px;top:892.24px;font-size:16px;color:rgba(25,45,65,.56);letter-spacing:0.5px;">$0.00</div>
<div class="t" style="left:1012px;top:892.24px;font-size:16px;color:rgba(25,45,65,.56);letter-spacing:0.5px;">Operating</div>
<div class="t" style="left:1572.5px;top:892.24px;font-size:16px;color:rgba(25,45,65,.6);letter-spacing:0.45px;font-style:italic;">North West Hospital</div>
<div class="t" style="left:1261.5px;top:892.24px;font-size:16px;color:#1787cc;letter-spacing:0.42px;font-weight:bold;text-decoration:underline;text-decoration-thickness:1.3px;text-underline-offset:2px;">Endoscopic Surgery</div>
<div class="t" style="left:1261.5px;top:911.24px;font-size:16px;color:rgba(25,45,65,.56);letter-spacing:0.4px;">11820</div>
<div class="t" style="left:1261.5px;top:930.24px;font-size:16px;color:rgba(25,45,65,.56);letter-spacing:0.4px;">$1352.29</div>
<svg style="position:absolute;left:1775.5px;top:872.44px;width:16px;height:16px;" viewBox="0 0 17 17"><path d="M1.2 12.6 L11.2 2.6 L14.4 5.8 L4.4 15.8 L0.4 16.6 Z" fill="#1f83cf"/><path d="M12.4 1.4 L13.6 0.2 A1 1 0 0 1 15 0.2 L16.8 2 A1 1 0 0 1 16.8 3.4 L15.6 4.6 Z" fill="#1f83cf"/></svg>
<svg style="position:absolute;left:1801px;top:875.94px;width:9px;height:9px;" viewBox="0 0 9 9"><path d="M0.8 0.8 L8.2 8.2 M8.2 0.8 L0.8 8.2" stroke="#1f83cf" stroke-width="1.7"/></svg>
<div style="position:absolute;left:251.5px;top:980.2px;width:1568.5px;height:113.86px;background:#eceff2;"></div>
<svg style="position:absolute;left:255px;top:988.2px;width:18px;height:18px;" viewBox="0 0 18 18"><circle cx="9" cy="9" r="7.3" fill="none" stroke="#1f83cf" stroke-width="2.6"/><path d="M4 4 L14 14" stroke="#1f83cf" stroke-width="2.6"/></svg>
<div class="t" style="left:283px;top:989.00px;font-size:16px;color:rgba(20,35,50,.68);letter-spacing:0.45px;font-weight:bold;">Lunch and learn - Xero rep</div>
<div class="t" style="left:1585.5px;top:989.00px;font-size:16px;color:rgba(25,45,65,.6);letter-spacing:0.45px;font-style:italic;">North West Hospital</div>
<svg style="position:absolute;left:1773.5px;top:988.2px;width:16px;height:16px;" viewBox="0 0 17 17"><path d="M1.2 12.6 L11.2 2.6 L14.4 5.8 L4.4 15.8 L0.4 16.6 Z" fill="#1f83cf"/><path d="M12.4 1.4 L13.6 0.2 A1 1 0 0 1 15 0.2 L16.8 2 A1 1 0 0 1 16.8 3.4 L15.6 4.6 Z" fill="#1f83cf"/></svg>
<svg style="position:absolute;left:1799px;top:991.7px;width:9px;height:9px;" viewBox="0 0 9 9"><path d="M0.8 0.8 L8.2 8.2 M8.2 0.8 L0.8 8.2" stroke="#1f83cf" stroke-width="1.7"/></svg>
<div style="position:absolute;left:252px;top:1095.96px;width:1572px;height:57.58px;background:#9fd0fa;border-radius:4px;"></div>
<div class="t" style="left:254px;top:1105.06px;font-size:16px;color:rgba(20,35,50,.68);letter-spacing:0.45px;font-weight:bold;">Mr Harrison Jones</div>
<div class="t" style="left:262.5px;top:1123.76px;font-size:16px;color:rgba(25,45,65,.56);letter-spacing:0.5px;">0423492177</div>
<div class="t" style="left:513px;top:1123.76px;font-size:16px;color:rgba(25,45,65,.56);letter-spacing:0.5px;">Private</div>
<div class="t" style="left:762.5px;top:1123.76px;font-size:16px;color:rgba(25,45,65,.56);letter-spacing:0.5px;">$0.00</div>
<div class="t" style="left:1012px;top:1123.76px;font-size:16px;color:rgba(25,45,65,.56);letter-spacing:0.5px;">Standard</div>
<div class="t" style="left:1572.5px;top:1123.76px;font-size:16px;color:rgba(25,45,65,.6);letter-spacing:0.45px;font-style:italic;">North West Hospital</div>
<svg style="position:absolute;left:1775.5px;top:1103.96px;width:16px;height:16px;" viewBox="0 0 17 17"><path d="M1.2 12.6 L11.2 2.6 L14.4 5.8 L4.4 15.8 L0.4 16.6 Z" fill="#1f83cf"/><path d="M12.4 1.4 L13.6 0.2 A1 1 0 0 1 15 0.2 L16.8 2 A1 1 0 0 1 16.8 3.4 L15.6 4.6 Z" fill="#1f83cf"/></svg>
<svg style="position:absolute;left:1801px;top:1107.46px;width:9px;height:9px;" viewBox="0 0 9 9"><path d="M0.8 0.8 L8.2 8.2 M8.2 0.8 L0.8 8.2" stroke="#1f83cf" stroke-width="1.7"/></svg>
<div style="position:absolute;left:252px;top:1154.4399999999998px;width:1572px;height:27px;background:#9fd0fa;border-radius:4px;"></div>
<div class="t" style="left:254px;top:1161.94px;font-size:16px;color:rgba(20,35,50,.68);letter-spacing:0.45px;font-weight:bold;">Mrs Beryl Egan</div>
<svg style="position:absolute;left:1775.5px;top:1162.4399999999998px;width:16px;height:16px;" viewBox="0 0 17 17"><path d="M1.2 12.6 L11.2 2.6 L14.4 5.8 L4.4 15.8 L0.4 16.6 Z" fill="#1f83cf"/><path d="M12.4 1.4 L13.6 0.2 A1 1 0 0 1 15 0.2 L16.8 2 A1 1 0 0 1 16.8 3.4 L15.6 4.6 Z" fill="#1f83cf"/></svg>
<svg style="position:absolute;left:1801px;top:1165.9399999999998px;width:9px;height:9px;" viewBox="0 0 9 9"><path d="M0.8 0.8 L8.2 8.2 M8.2 0.8 L0.8 8.2" stroke="#1f83cf" stroke-width="1.7"/></svg>
<div style="position:absolute;left:252px;top:1211.72px;width:1572px;height:55.98px;background:#69c9f6;border-radius:4px;"></div>
<div class="t" style="left:254px;top:1220.82px;font-size:16px;color:rgba(20,35,50,.68);letter-spacing:0.45px;font-weight:bold;">Mrs June Berry</div>
<div class="t" style="left:262.5px;top:1239.52px;font-size:16px;color:rgba(25,45,65,.56);letter-spacing:0.5px;">0444 444 444</div>
<div class="t" style="left:513px;top:1239.52px;font-size:16px;color:rgba(25,45,65,.56);letter-spacing:0.5px;">DVA</div>
<div class="t" style="left:762.5px;top:1239.52px;font-size:16px;color:rgba(25,45,65,.56);letter-spacing:0.5px;">$0.00</div>
<div class="t" style="left:1012px;top:1239.52px;font-size:16px;color:rgba(25,45,65,.56);letter-spacing:0.5px;">New Patient</div>
<div class="t" style="left:1572.5px;top:1239.52px;font-size:16px;color:rgba(25,45,65,.6);letter-spacing:0.45px;font-style:italic;">North West Hospital</div>
<svg style="position:absolute;left:1775.5px;top:1219.72px;width:16px;height:16px;" viewBox="0 0 17 17"><path d="M1.2 12.6 L11.2 2.6 L14.4 5.8 L4.4 15.8 L0.4 16.6 Z" fill="#1f83cf"/><path d="M12.4 1.4 L13.6 0.2 A1 1 0 0 1 15 0.2 L16.8 2 A1 1 0 0 1 16.8 3.4 L15.6 4.6 Z" fill="#1f83cf"/></svg>
<svg style="position:absolute;left:1801px;top:1223.22px;width:9px;height:9px;" viewBox="0 0 9 9"><path d="M0.8 0.8 L8.2 8.2 M8.2 0.8 L0.8 8.2" stroke="#1f83cf" stroke-width="1.7"/></svg>
<div style="position:absolute;left:252px;top:1269.6px;width:1572px;height:55.98px;background:#9fd0fa;border-radius:4px;"></div>
<div class="t" style="left:254px;top:1278.70px;font-size:16px;color:rgba(20,35,50,.68);letter-spacing:0.45px;font-weight:bold;">Mr Lyle Catniss</div>
<div class="t" style="left:262.5px;top:1297.40px;font-size:16px;color:rgba(25,45,65,.56);letter-spacing:0.5px;">0415687956</div>
<div class="t" style="left:513px;top:1297.40px;font-size:16px;color:rgba(25,45,65,.56);letter-spacing:0.5px;">Private</div>
<div class="t" style="left:762.5px;top:1297.40px;font-size:16px;color:rgba(25,45,65,.56);letter-spacing:0.5px;">$0.00</div>
<div class="t" style="left:1012px;top:1297.40px;font-size:16px;color:rgba(25,45,65,.56);letter-spacing:0.5px;">Standard</div>
<div class="t" style="left:1572.5px;top:1297.40px;font-size:16px;color:rgba(25,45,65,.6);letter-spacing:0.45px;font-style:italic;">North West Hospital</div>
<svg style="position:absolute;left:1775.5px;top:1277.6px;width:16px;height:16px;" viewBox="0 0 17 17"><path d="M1.2 12.6 L11.2 2.6 L14.4 5.8 L4.4 15.8 L0.4 16.6 Z" fill="#1f83cf"/><path d="M12.4 1.4 L13.6 0.2 A1 1 0 0 1 15 0.2 L16.8 2 A1 1 0 0 1 16.8 3.4 L15.6 4.6 Z" fill="#1f83cf"/></svg>
<svg style="position:absolute;left:1801px;top:1281.1px;width:9px;height:9px;" viewBox="0 0 9 9"><path d="M0.8 0.8 L8.2 8.2 M8.2 0.8 L0.8 8.2" stroke="#1f83cf" stroke-width="1.7"/></svg>
<div style="position:absolute;left:252px;top:1152px;width:1572px;height:0px;border-top:1px dotted #ffffff;"></div>
<svg style="position:absolute;left:768px;top:1096.46px;width:540px;height:56px;" viewBox="0 0 540 56"><path d="M1 1 L539 53 M1 53 L539 1" stroke="#56707f" stroke-width="1.8"/></svg></div></body></html>
